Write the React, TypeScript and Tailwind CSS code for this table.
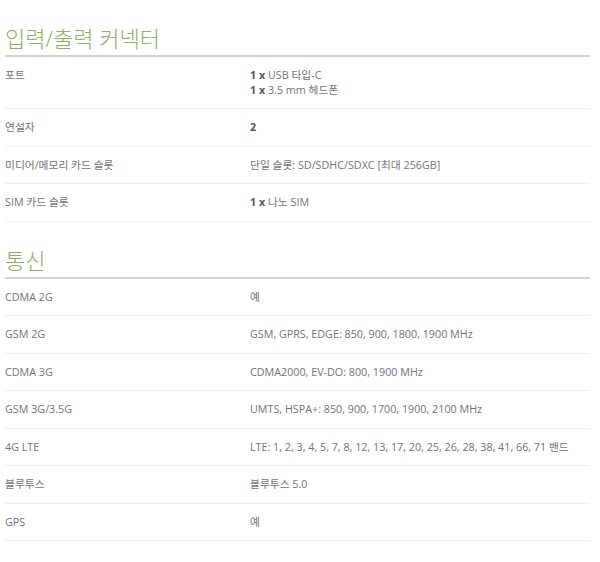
const sections: { title: string; rows: [string, React.ReactNode][] }[] = [
  {
    title: "입력/출력 커넥터",
    rows: [
      [
        "포트",
        <>
          <div>
            <b className="font-bold text-[#555]">1 x</b> USB 타입-C
          </div>
          <div>
            <b className="font-bold text-[#555]">1 x</b> 3.5 mm 헤드폰
          </div>
        </>,
      ],
      ["연설자", <b className="font-bold text-[#555]">2</b>],
      ["미디어/메모리 카드 슬롯", "단일 슬롯: SD/SDHC/SDXC [최대 256GB]"],
      [
        "SIM 카드 슬롯",
        <>
          <b className="font-bold text-[#555]">1 x</b> 나노 SIM
        </>,
      ],
    ],
  },
  {
    title: "통신",
    rows: [
      ["CDMA 2G", "예"],
      ["GSM 2G", "GSM, GPRS, EDGE: 850, 900, 1800, 1900 MHz"],
      ["CDMA 3G", "CDMA2000, EV-DO: 800, 1900 MHz"],
      ["GSM 3G/3.5G", "UMTS, HSPA+: 850, 900, 1700, 1900, 2100 MHz"],
      ["4G LTE", "LTE: 1, 2, 3, 4, 5, 7, 8, 12, 13, 17, 20, 25, 26, 28, 38, 41, 66, 71 밴드"],
      ["블루투스", "블루투스 5.0"],
      ["GPS", "예"],
    ],
  },
];

export default function App() {
  return (
    <div className="w-[600px] h-[562px] bg-white font-['Open_Sans','Noto_Sans_CJK_KR',sans-serif] text-[10.75px] text-[#737373]">
      <div className="ml-[5px] w-[585px]">
        {sections.map(s => (
          <section key={s.title} className="pt-[23px]">
            <h2 className="text-[22px] leading-[30px] pb-[2px] border-b-2 border-[#d2d2d2] text-[#8cae66] font-light">{s.title}</h2>
            {s.rows.map(([label, value]) => (
              <div key={label} className="flex py-[11px] leading-[14.5px] border-b border-[#ededed]">
                <div className="w-[245px] shrink-0">{label}</div>
                <div>{value}</div>
              </div>
            ))}
          </section>
        ))}
      </div>
    </div>
  );
}
